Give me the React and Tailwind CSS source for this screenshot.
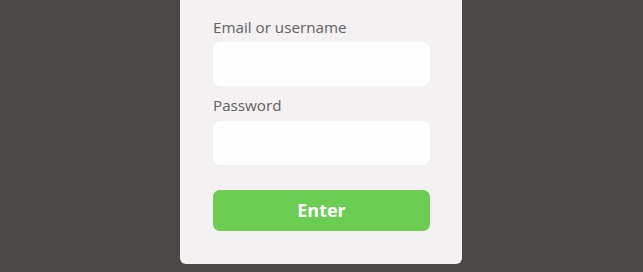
export default function App() {
    return (
        <div className="w-full h-[272px] bg-[#4a4845] overflow-hidden" style={{ fontFamily: '"Open Sans", "Liberation Sans", sans-serif' }}>
            <div className="ml-[180px] w-[282px] h-[264px] bg-[#f3f1f1] rounded-b-[6px] pt-[17px] pl-[33px] pr-[32px]">
                {/* Email */}
                <label className="block text-[15.2px] leading-[20px] text-[#616161]">Email or username</label>
                <div className="mt-[5px] h-[44px] bg-[#fefefe] rounded-[7px]"></div>

                {/* Password */}
                <label className="block mt-[9px] text-[15.2px] leading-[20px] text-[#616161]">Password</label>
                <div className="mt-[6px] h-[44px] bg-[#fefefe] rounded-[7px]"></div>

                {/* Submit */}
                <button className="mt-[25px] w-full h-[41px] bg-[#6bcd51] rounded-[7px] text-white text-[18px] font-bold flex items-center justify-center">
                    Enter
                </button>
            </div>
        </div>
    );
}
